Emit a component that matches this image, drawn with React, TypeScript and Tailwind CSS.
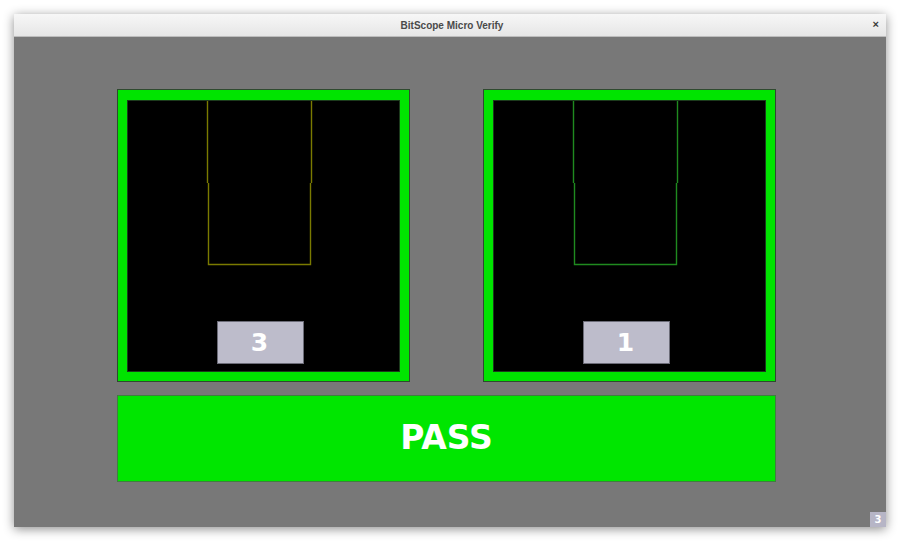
function Trace({ color }: { color: string }) {
  // probe outline drawn inside the black meter area
  return (
    <svg className="absolute inset-0" width="273" height="272" viewBox="0 0 273 272">
      <path
        d="M79.5 0 V82 M80.5 82 V163.5 H182.5 V82 M183.5 82 V0"
        fill="none"
        stroke={color}
        strokeWidth="1.4"
      />
    </svg>
  )
}

function Meter({ value, trace }: { value: string; trace: string }) {
  return (
    <div className="w-[293px] h-[293px] border border-[#2f4a2f] bg-[#00e400] p-[9px] pt-[10px]">
      <div className="relative w-full h-full bg-black border border-[#1c3a1c] flex flex-col items-center justify-end pb-[7px] pr-[6px]">
        <Trace color={trace} />
        <div
          className="relative w-[87px] h-[43px] bg-[#bdbccb] border border-[#6c6c78] flex items-center justify-center text-white font-bold text-[25px] leading-none pr-[2px]"
          style={{ fontFamily: '"DejaVu Sans", sans-serif' }}
        >
          {value}
        </div>
      </div>
    </div>
  )
}

export default function App() {
  return (
    <div className="w-[900px] h-[541px] bg-white p-[14px] pb-[14px]">
      <div className="w-[872px] h-[513px] flex flex-col shadow-[0_2px_10px_rgba(0,0,0,0.45)]">
        <div
          className="h-[23px] shrink-0 bg-gradient-to-b from-[#f7f7f7] to-[#e6e6e6] border-b border-[#bdbdbd] flex items-center relative"
          style={{ fontFamily: '"Liberation Sans", sans-serif' }}
        >
          <div className="flex-1 text-center text-[10px] font-bold text-[#4a4a4a] pl-[4px]">
            BitScope Micro Verify
          </div>
          <div className="absolute right-[7px] top-[5px] text-[11px] font-bold text-[#3a3a3a] leading-none">×</div>
        </div>
        <div className="flex-1 bg-[#787878] relative pl-[103px] pt-[52px]">
          <div className="w-[659px] flex flex-col gap-[13px]">
            <div className="flex justify-between">
              <Meter value="3" trace="#7a7a00" />
              <Meter value="1" trace="#1f8a1f" />
            </div>
            <div
              className="h-[87px] bg-[#00e600] border border-[#3f7f3f] flex items-center justify-center text-white font-bold text-[33px] pb-[2px]"
              style={{ fontFamily: '"DejaVu Sans", sans-serif' }}
            >
              PASS
            </div>
          </div>
          <div
            className="absolute right-0 bottom-0 w-[16px] h-[15px] bg-[#b6b5c6] flex items-center justify-center text-white text-[10px] font-bold"
            style={{ fontFamily: '"DejaVu Sans", sans-serif' }}
          >
            3
          </div>
        </div>
      </div>
    </div>
  )
}
